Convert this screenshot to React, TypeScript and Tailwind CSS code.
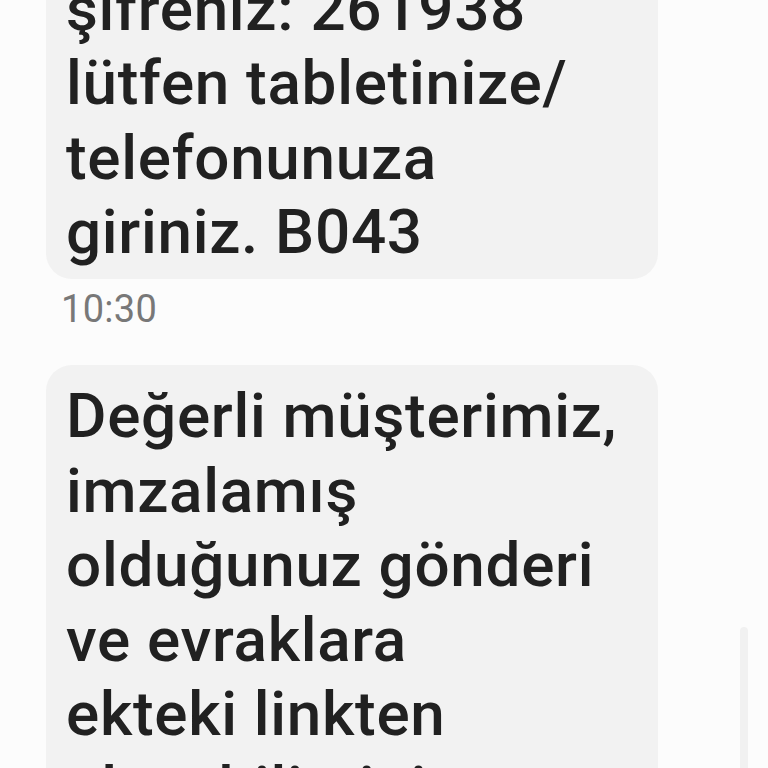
import React from "react";

const textStyle = "font-['Roboto',_'Noto_Sans',_sans-serif] font-medium text-[62px] leading-[74.5px] tracking-[0.7px] text-[#212121] whitespace-nowrap";

export default function App() {
  return (
    <div className="relative h-[768px] w-[768px] overflow-hidden bg-[#fcfcfc]">
      <div className="flex flex-col items-start pl-[46px] -mt-[44px]">
        <div className={`w-[612px] rounded-[26px] bg-[#f2f2f2] pl-[20px] pr-4 pt-[15.6px] pb-[9px] ${textStyle}`}>
          şifreniz: 261938
          <br />
          lütfen tabletinize/
          <br />
          telefonunuza
          <br />
          giriniz. B043
        </div>
        <div className="mt-[8px] pl-[15px] font-['Roboto',_sans-serif] text-[38px] leading-[44px] tracking-[0.3px] text-[#787878]">
          10:30
        </div>
        <div className={`mt-[34px] w-[612px] rounded-[26px] bg-[#f2f2f2] pl-[20px] pr-4 pt-[14.6px] pb-[20px] ${textStyle}`}>
          Değerli müşterimiz,
          <br />
          imzalamış
          <br />
          olduğunuz gönderi
          <br />
          ve evraklara
          <br />
          ekteki linkten
          <br />
          ulaşabilirsiniz.
        </div>
      </div>
      <div className="absolute left-[740px] top-[627px] h-[160px] w-[8px] rounded-t-full bg-[#f1f1f1]" />
    </div>
  );
}
